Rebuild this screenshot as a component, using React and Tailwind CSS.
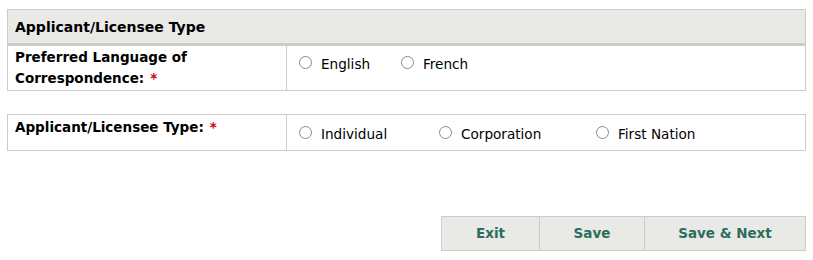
import React from 'react';

const font = { fontFamily: '"DejaVu Sans", Verdana, sans-serif' };

function Radio({ label, className = '' }) {
  return (
    <label className={`flex items-center ${className}`}>
      <span className="inline-block w-[13px] h-[13px] rounded-full border border-[#8a8a8a] bg-white mr-[9px] mt-[-3px]" />
      <span className="text-[13.6px] text-black">{label}</span>
    </label>
  );
}

function Req() {
  return <span className="text-[#cc0000] ml-[6px]">*</span>;
}

export default function App() {
  return (
    <div className="w-[813px] h-[260px] bg-white relative" style={font}>
      <div className="pt-[9px] pl-[7px]">
        <div className="w-[799px] border border-[#cccccc]">
          <div className="h-[36px] bg-[#e9e9e5] border-b-[3px] border-[#cccccc] flex items-center pl-[7px] pt-[1px] text-[14px] font-bold text-black">
            Applicant/Licensee Type
          </div>
          <div className="flex h-[44px]">
            <div className="w-[279px] border-r border-[#cccccc] pl-[7px] pt-[1px] text-[13.5px] font-bold leading-[21px] text-black">
              Preferred Language of<br />Correspondence:<Req />
            </div>
            <div className="flex pl-[12px] pt-[8px] items-start">
              <Radio label="English" className="w-[102px]" />
              <Radio label="French" />
            </div>
          </div>
        </div>

        <div className="w-[799px] h-[37px] border border-[#cccccc] mt-[23px] flex">
          <div className="w-[279px] border-r border-[#cccccc] pl-[7px] pt-[2px] text-[13.5px] font-bold leading-[21px] text-black">
            Applicant/Licensee Type:<Req />
          </div>
          <div className="flex pl-[12px] pt-[9px] items-start">
            <Radio label="Individual" className="w-[140px]" />
            <Radio label="Corporation" className="w-[157px]" />
            <Radio label="First Nation" />
          </div>
        </div>

        <div className="flex justify-end w-[799px] mt-[65px]">
          <div className="flex h-[35px] border border-[#cccccc] bg-[#e9e9e5] text-[13.5px] font-bold text-[#2b6e5f]">
            <button className="w-[98px] border-r border-[#cccccc]">Exit</button>
            <button className="w-[105px] border-r border-[#cccccc]">Save</button>
            <button className="w-[160px]">Save &amp; Next</button>
          </div>
        </div>
      </div>
    </div>
  );
}
